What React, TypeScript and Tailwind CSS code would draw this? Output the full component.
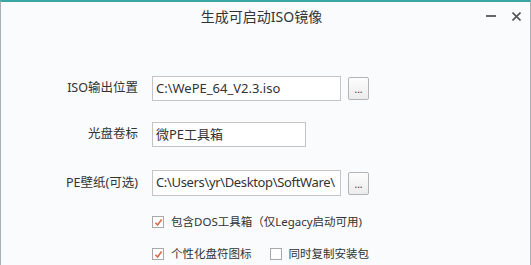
import React from "react";

const font = { fontFamily: '"Noto Sans", "Noto Sans CJK SC", sans-serif' };

function CheckBox({ checked, label }: { checked: boolean; label: string }) {
  return (
    <label className="flex items-center gap-[7px]">
      <span className="flex h-[12px] w-[12px] items-center justify-center border border-[#a8a8a8] bg-white">
        {checked && (
          <svg width="9" height="9" viewBox="0 0 9 9">
            <path d="M1.5 4.8 L3.6 7 L7.6 1.6" fill="none" stroke="#dd6a45" strokeWidth="1.6" />
          </svg>
        )}
      </span>
      <span className="text-[11.5px] text-[#333]">{label}</span>
    </label>
  );
}

function BrowseButton() {
  return (
    <button className="ml-[7px] flex h-[23px] w-[21px] items-end justify-center rounded-[2px] border border-[#b4b4b4] bg-gradient-to-b from-[#fdfdfd] to-[#ececec] pb-[5px] text-[10px] leading-none text-[#333]">
      ...
    </button>
  );
}

export default function App() {
  return (
    <div
      className="flex h-[265px] w-[531px] flex-col border-t-2 border-l border-r border-t-[#3aa5a2] border-l-[#a9b0b3] border-r-[#a9b0b3] bg-[#f9fbfc]"
      style={font}
    >
      {/* Title bar */}
      <div className="relative flex h-[28px] items-center justify-center pr-[8px]">
        <span className="text-[14px] text-[#333]">生成可启动ISO镜像</span>
        <div className="absolute right-[9px] top-0 flex h-full items-center gap-[16px]">
          <span className="block h-[2px] w-[10px] bg-[#666]" />
          <svg width="9" height="9" viewBox="0 0 9 9">
            <path d="M0.5 0.5 L8.5 8.5 M8.5 0.5 L0.5 8.5" stroke="#555" strokeWidth="1.6" />
          </svg>
        </div>
      </div>

      {/* Form */}
      <div className="flex flex-col text-[13px] text-[#333]">
        <div className="mt-[46px] flex h-[25px] items-center">
          <span className="w-[137px] text-right text-[12.5px]">ISO输出位置</span>
          <div className="ml-[14px] flex h-full w-[189px] items-center border border-[#c4c4c4] bg-white px-[3px]">
            C:\WePE_64_V2.3.iso
          </div>
          <BrowseButton />
        </div>

        <div className="mt-[21px] flex h-[25px] items-center">
          <span className="w-[137px] text-right text-[12.5px]">光盘卷标</span>
          <div className="ml-[14px] flex h-full w-[154px] items-center border border-[#c4c4c4] bg-white px-[3px]">
            微PE工具箱
          </div>
        </div>

        <div className="mt-[23px] flex h-[26px] items-center">
          <span className="w-[137px] text-right text-[12.5px]">PE壁纸(可选)</span>
          <div className="ml-[14px] flex h-full w-[189px] items-center overflow-hidden whitespace-nowrap border border-[#c4c4c4] bg-white px-[3px] tracking-[-0.35px]">
            C:\Users\yr\Desktop\SoftWare\
          </div>
          <BrowseButton />
        </div>

        <div className="ml-[151px] mt-[18px] flex h-[16px] items-center">
          <CheckBox checked label="包含DOS工具箱（仅Legacy启动可用)" />
        </div>

        <div className="ml-[151px] mt-[16px] flex h-[16px] items-center gap-[18px]">
          <CheckBox checked label="个性化盘符图标" />
          <CheckBox checked={false} label="同时复制安装包" />
        </div>
      </div>
    </div>
  );
}
